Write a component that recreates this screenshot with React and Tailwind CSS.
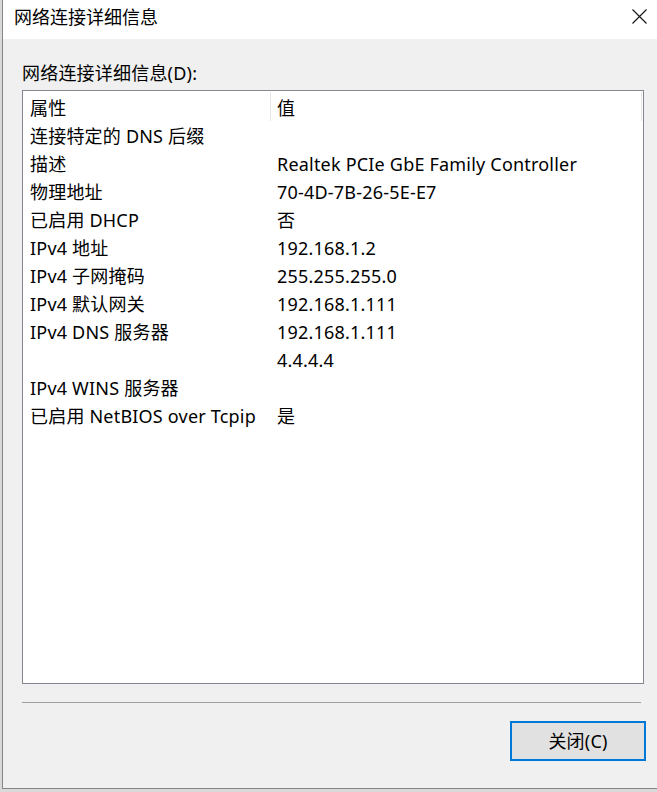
import React from 'react';

const rows = [
  ['连接特定的 DNS 后缀', ''],
  ['描述', 'Realtek PCIe GbE Family Controller'],
  ['物理地址', '70-4D-7B-26-5E-E7'],
  ['已启用 DHCP', '否'],
  ['IPv4 地址', '192.168.1.2'],
  ['IPv4 子网掩码', '255.255.255.0'],
  ['IPv4 默认网关', '192.168.1.111'],
  ['IPv4 DNS 服务器', '192.168.1.111'],
  ['', '4.4.4.4'],
  ['IPv4 WINS 服务器', ''],
  ['已启用 NetBIOS over Tcpip', '是'],
];

const font = { fontFamily: '"Noto Sans", "Noto Sans CJK SC", sans-serif' };

export default function App() {
  return (
    <div className="w-[657px] h-[792px] bg-[#d9d9d9] overflow-hidden text-black" style={font}>
      <div className="ml-[2px] h-[789px] border-l border-b border-[#858585] bg-[#f0f0f0] flex flex-col">
        {/* Title bar */}
        <div className="h-[39px] bg-white flex items-center justify-between shrink-0">
          <span className="pl-[11px] mb-[6px] text-[18px] leading-none">网络连接详细信息</span>
          <svg className="mr-[10px] mb-[6px]" width="15" height="15" viewBox="0 0 15 15">
            <path d="M0.5 0.5L14.5 14.5M14.5 0.5L0.5 14.5" stroke="#111" strokeWidth="1.1" />
          </svg>
        </div>

        {/* Body */}
        <div className="pl-[19px] pr-[10px] flex flex-col tracking-[0.2px]">
          <div className="mt-[23px] h-[22px] text-[18px] leading-[22px]">网络连接详细信息(D):</div>

          <div className="mt-[6px] w-[622px] h-[594px] border border-[#828790] bg-white">
            <div className="h-[31px] flex items-stretch text-[18px]">
              <div className="w-[247px] pl-[7px] pt-[3px] flex items-center">属性</div>
              <div className="w-px my-[1px] bg-[#e5e5e5]" />
              <div className="flex-1 pl-[6px] pt-[3px] flex items-center">值</div>
              <div className="w-px my-[1px] mr-[1px] bg-[#e5e5e5]" />
            </div>
            {rows.map(([k, v], i) => (
              <div key={i} className="h-[28px] flex items-center text-[18px]">
                <div className="w-[248px] pl-[7px] whitespace-nowrap">{k}</div>
                <div className="flex-1 pl-[6px] whitespace-nowrap">{v}</div>
              </div>
            ))}
          </div>

          <div className="mt-[18px] w-[619px] h-px bg-[#a0a0a0]" />

          <div className="mt-[18px] flex justify-end w-[624px]">
            <button className="w-[136px] h-[40px] border-2 border-[#0078d7] bg-[#e1e1e1] text-[18px] leading-none">
              关闭(C)
            </button>
          </div>
        </div>
      </div>
    </div>
  );
}
